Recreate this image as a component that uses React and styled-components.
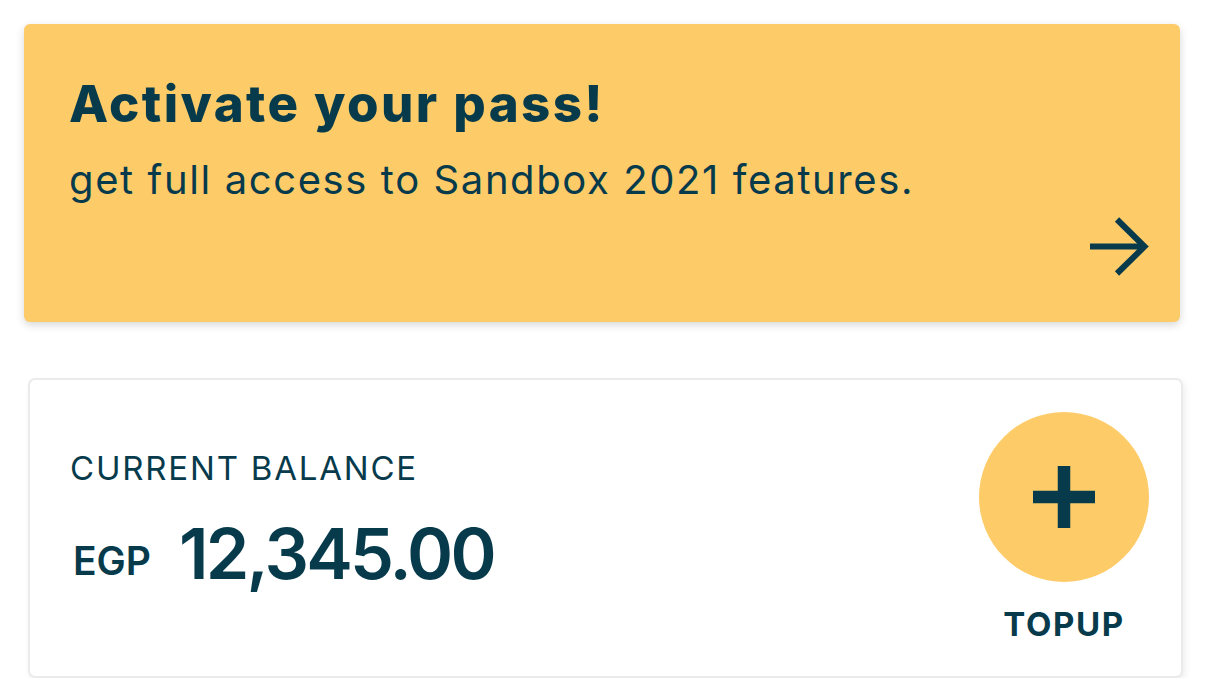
import React from 'react';
import styled, { createGlobalStyle } from 'styled-components';

const GlobalStyle = createGlobalStyle`
  body {
    margin: 0;
    background: #ffffff;
    font-family: Inter, 'Open Sans', sans-serif;
    color: #073b4c;
  }
`;

const Page = styled.div`
  display: flex;
  flex-direction: column;
  gap: 56px;
  padding: 24px 28px 0 24px;
`;

const PassCard = styled.div`
  display: flex;
  flex-direction: column;
  background: #fdcc69;
  border-radius: 6px;
  padding: 54px 30px 46px 45px;
  box-shadow: 0 3px 8px rgba(0, 0, 0, 0.16);
`;

const Title = styled.h1`
  margin: 0;
  font-size: 51px;
  line-height: 1;
  font-weight: 800;
  letter-spacing: 2.4px;
`;

const Subtitle = styled.p`
  margin: 31px 0 0;
  font-size: 40px;
  line-height: 1;
  font-weight: 400;
  letter-spacing: 1.6px;
`;

const ArrowRow = styled.div`
  display: flex;
  justify-content: flex-end;
  margin-top: 16px;
`;

const BalanceCard = styled.div`
  display: flex;
  justify-content: space-between;
  align-items: flex-start;
  margin: 0 -3px 0 4px;
  padding: 32px 32px 35px 40px;
  background: #ffffff;
  border: 2px solid #ebebeb;
  border-radius: 7px;
  box-shadow: 2px 3px 6px rgba(0, 0, 0, 0.07);
`;

const BalanceInfo = styled.div`
  display: flex;
  flex-direction: column;
  padding-top: 40px;
`;

const Label = styled.div`
  font-size: 33px;
  line-height: 1;
  font-weight: 400;
  letter-spacing: 1.8px;
`;

const AmountRow = styled.div`
  display: flex;
  align-items: flex-end;
  gap: 28px;
  margin-top: 34px;
`;

const Currency = styled.span`
  font-size: 39px;
  line-height: 1;
  font-weight: 600;
  margin-bottom: 9px;
  margin-left: 3px;
`;

const Amount = styled.span`
  font-size: 70px;
  line-height: 1;
  font-weight: 600;
  letter-spacing: -2.8px;
`;

const TopupAction = styled.div`
  display: flex;
  flex-direction: column;
  align-items: center;
  gap: 26px;
`;

const CircleButton = styled.button`
  width: 170px;
  height: 170px;
  border: none;
  border-radius: 50%;
  padding: 0;
  background: #fdcc69;
  display: flex;
  align-items: center;
  justify-content: center;
  color: #073b4c;
  cursor: pointer;
`;

const ActionLabel = styled.span`
  font-size: 33px;
  line-height: 1;
  font-weight: 700;
  letter-spacing: 1.6px;
`;

const ArrowIcon = () => (
  <svg width="60" height="60" viewBox="0 0 60 60" fill="none">
    <path d="M0 30.5H54" stroke="#073b4c" strokeWidth="6" />
    <path d="M27 3.5L54.5 30.5L27 57.5" stroke="#073b4c" strokeWidth="6" strokeLinejoin="miter" />
  </svg>
);

const PlusIcon = () => (
  <svg width="62" height="62" viewBox="0 0 62 62">
    <rect x="24.75" y="0" width="12.5" height="62" fill="currentColor" />
    <rect x="0" y="24.75" width="62" height="12.5" fill="currentColor" />
  </svg>
);

export default function App() {
  return (
    <>
      <GlobalStyle />
      <Page>
        <PassCard>
          <Title>Activate your pass!</Title>
          <Subtitle>get full access to Sandbox 2021 features.</Subtitle>
          <ArrowRow>
            <ArrowIcon />
          </ArrowRow>
        </PassCard>
        <BalanceCard>
          <BalanceInfo>
            <Label>CURRENT BALANCE</Label>
            <AmountRow>
              <Currency>EGP</Currency>
              <Amount>12,345.00</Amount>
            </AmountRow>
          </BalanceInfo>
          <TopupAction>
            <CircleButton aria-label="Top up">
              <PlusIcon />
            </CircleButton>
            <ActionLabel>TOPUP</ActionLabel>
          </TopupAction>
        </BalanceCard>
      </Page>
    </>
  );
}
